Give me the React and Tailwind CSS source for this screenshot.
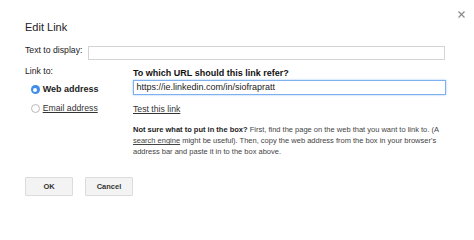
import React from "react";

export default function App() {
  return (
    <div className="relative w-[474px] h-[215px] bg-white overflow-hidden font-['Liberation_Sans','Helvetica',Arial,sans-serif] text-[#222] pl-[25px] pt-[21.5px]">
      <svg className="absolute left-[458px] top-[10.5px]" width="7" height="7" viewBox="0 0 7 7">
        <path d="M0.5 0.5 L6.5 6.5 M6.5 0.5 L0.5 6.5" stroke="#8a8a8a" strokeWidth="1.2" />
      </svg>

      <div className="text-[11px] leading-[11px] text-[#222]">Edit Link</div>

      <div className="flex items-start mt-[12px]">
        <div className="w-[63px] text-[8.7px] leading-[11px] whitespace-nowrap">Text to display:</div>
        <div className="mt-[1px] w-[357px] h-[14px] border border-[#d4d4d4] bg-white" />
      </div>

      <div className="flex mt-[6.4px]">
        <div className="w-[108px] shrink-0">
          <div className="text-[8.7px] leading-[11px]">Link to:</div>
          <div className="flex items-center mt-[7.4px] pl-[5.5px]">
            <div className="w-[9px] h-[9px] rounded-full bg-[#3f8de8] flex items-center justify-center">
              <div className="w-[3.5px] h-[3.5px] rounded-full bg-white" />
            </div>
            <span className="ml-[3.2px] text-[9px] leading-[11px] font-bold text-[#222]">Web address</span>
          </div>
          <div className="flex items-center mt-[8.2px] pl-[5.5px]">
            <div className="w-[9px] h-[9px] rounded-full border border-[#b9b9b9] bg-white" />
            <span className="ml-[3.2px] text-[8.7px] leading-[11px] underline text-[#333]">Email address</span>
          </div>
        </div>

        <div className="mt-[2.4px]">
          <div className="text-[9px] leading-[11px] font-bold text-[#111] whitespace-nowrap">To which URL should this link refer?</div>
          <div className="mt-[1.2px] w-[313px] h-[15px] border border-[#7fb0ee] shadow-[0_0_2px_#9cc3f3] bg-white flex items-center pl-[2.5px] text-[9px] leading-[11px] text-[#222] whitespace-nowrap">
            https://ie.linkedin.com/in/siofrapratt
          </div>
          <div className="mt-[8.4px] text-[8.7px] leading-[11px] underline text-[#333]">Test this link</div>
          <div className="mt-[9px] text-[7.5px] leading-[11.3px] text-[#444] whitespace-nowrap">
            <span className="font-bold text-[#222]">Not sure what to put in the box?</span> First, find the page on the web that you want to link to. (A
            <br />
            <span className="underline">search engine</span> might be useful). Then, copy the web address from the box in your browser's
            <br />
            address bar and paste it in to the box above.
          </div>
        </div>
      </div>

      <div className="flex gap-[12px] mt-[19px]">
        <div className="w-[48px] h-[19px] bg-[#f3f3f3] border border-[#dcdcdc] rounded-[1px] flex items-center justify-center text-[7.5px] font-bold text-[#333]">OK</div>
        <div className="w-[48px] h-[19px] bg-[#f3f3f3] border border-[#dcdcdc] rounded-[1px] flex items-center justify-center text-[7.5px] font-bold text-[#333]">Cancel</div>
      </div>
    </div>
  );
}
